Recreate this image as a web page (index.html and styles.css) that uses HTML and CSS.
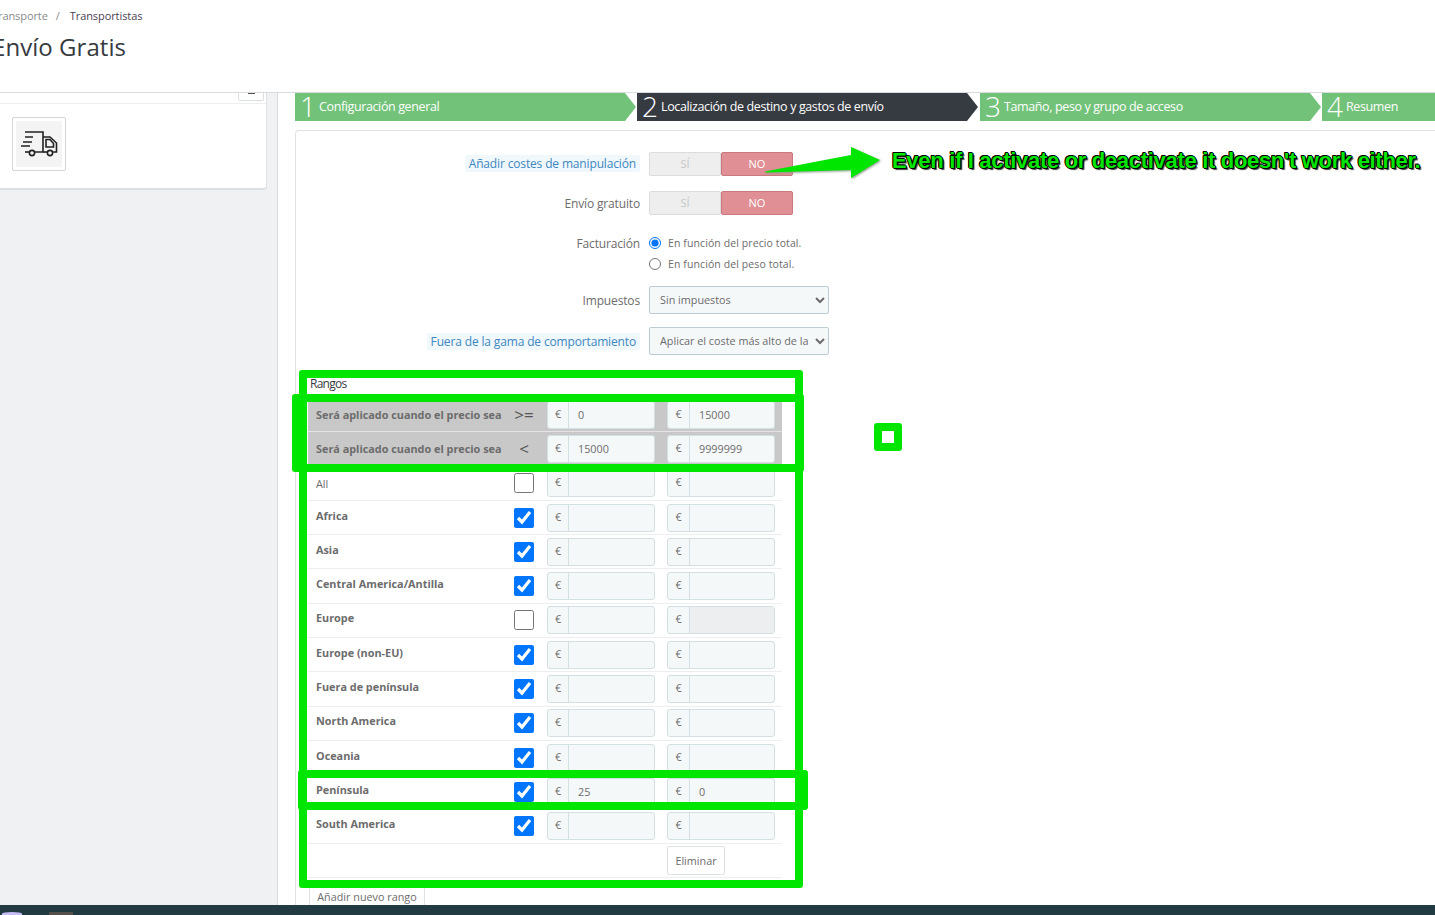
FILE: index.html
```html
<!DOCTYPE html>
<html lang="es">
<head>
  <meta charset="UTF-8" />
  <title>Envío Gratis</title>
  <link rel="stylesheet" href="styles.css">
</head>
<body>
  <div class="page">
    <header class="top">
      <div class="crumbs"><span class="crumb-link">Transporte</span><span class="crumb-sep">/</span><span class="crumb-now">Transportistas</span></div>
      <h1>Envío Gratis</h1>
    </header>

    <div class="main">
      <aside class="side">
        <div class="side-card">
          <div class="side-head"><span class="side-btn"></span></div>
          <div class="thumb">
            <div class="thumb-in">
              <svg width="40" height="34" viewBox="0 0 40 34" fill="none" stroke="#222" stroke-width="1.6">
                <path d="M6 5H24V25H16" />
                <path d="M24 10H31L37.5 16V25H34" />
                <path d="M28 25H24" />
                <path d="M27 12.5H31L34.5 16.5V20H27Z" />
                <circle cx="13" cy="26" r="2.6" />
                <circle cx="31" cy="26" r="2.6" />
                <path d="M6 25H10" />
                <path d="M6 10H14M4 15H13M2 19H11" />
              </svg>
            </div>
          </div>
        </div>
      </aside>

      <div class="content">
        <div class="steps">
          <div class="step"><span class="step-num">1</span>Configuración general</div>
          <div class="step step-on"><span class="step-num">2</span>Localización de destino y gastos de envío</div>
          <div class="step step-3"><span class="step-num">3</span>Tamaño, peso y grupo de acceso</div>
          <div class="step step-last"><span class="step-num">4</span>Resumen</div>
        </div>

        <div class="panel">
          <div class="form-row row-1">
            <div class="label"><span class="hint">Añadir costes de manipulación</span></div>
            <div class="toggle"><span class="opt-si">SÍ</span><span class="opt-no">NO</span></div>
          </div>
          <div class="form-row row-2">
            <div class="label">Envío gratuito</div>
            <div class="toggle"><span class="opt-si">SÍ</span><span class="opt-no">NO</span></div>
          </div>
          <div class="form-row row-3">
            <div class="label label-radio">Facturación</div>
            <div class="radios">
              <label class="radio"><input type="radio" name="fact" checked>En función del precio total.</label>
              <label class="radio"><input type="radio" name="fact">En función del peso total.</label>
            </div>
          </div>
          <div class="form-row row-4">
            <div class="label">Impuestos</div>
            <select class="sel"><option>Sin impuestos</option></select>
          </div>
          <div class="form-row row-5">
            <div class="label"><span class="hint">Fuera de la gama de comportamiento</span></div>
            <select class="sel"><option>Aplicar el coste más alto de la gama definida</option></select>
          </div>

          <div class="ranges-title">Rangos</div>
          <div class="ranges">
            <div class="range range-head">
              <div class="range-name">Será aplicado cuando el precio sea</div>
              <div class="range-sign">&gt;=</div>
              <div class="money"><span>€</span><input value="0"></div>
              <div class="money"><span>€</span><input value="15000"></div>
            </div>
            <div class="range range-head">
              <div class="range-name">Será aplicado cuando el precio sea</div>
              <div class="range-sign">&lt;</div>
              <div class="money"><span>€</span><input value="15000"></div>
              <div class="money"><span>€</span><input value="9999999"></div>
            </div>
            <div class="range">
              <div class="range-name range-all">All</div>
              <input class="check" type="checkbox">
              <div class="money"><span>€</span><input></div>
              <div class="money"><span>€</span><input></div>
            </div>
            <div class="range">
              <div class="range-name">Africa</div>
              <input class="check" type="checkbox" checked>
              <div class="money"><span>€</span><input></div>
              <div class="money"><span>€</span><input></div>
            </div>
            <div class="range">
              <div class="range-name">Asia</div>
              <input class="check" type="checkbox" checked>
              <div class="money"><span>€</span><input></div>
              <div class="money"><span>€</span><input></div>
            </div>
            <div class="range">
              <div class="range-name">Central America/Antilla</div>
              <input class="check" type="checkbox" checked>
              <div class="money"><span>€</span><input></div>
              <div class="money"><span>€</span><input></div>
            </div>
            <div class="range">
              <div class="range-name">Europe</div>
              <input class="check" type="checkbox">
              <div class="money"><span>€</span><input></div>
              <div class="money money-off"><span>€</span><input disabled></div>
            </div>
            <div class="range">
              <div class="range-name">Europe (non-EU)</div>
              <input class="check" type="checkbox" checked>
              <div class="money"><span>€</span><input></div>
              <div class="money"><span>€</span><input></div>
            </div>
            <div class="range">
              <div class="range-name">Fuera de península</div>
              <input class="check" type="checkbox" checked>
              <div class="money"><span>€</span><input></div>
              <div class="money"><span>€</span><input></div>
            </div>
            <div class="range">
              <div class="range-name">North America</div>
              <input class="check" type="checkbox" checked>
              <div class="money"><span>€</span><input></div>
              <div class="money"><span>€</span><input></div>
            </div>
            <div class="range">
              <div class="range-name">Oceania</div>
              <input class="check" type="checkbox" checked>
              <div class="money"><span>€</span><input></div>
              <div class="money"><span>€</span><input></div>
            </div>
            <div class="range">
              <div class="range-name">Península</div>
              <input class="check" type="checkbox" checked>
              <div class="money"><span>€</span><input value="25"></div>
              <div class="money"><span>€</span><input value="0"></div>
            </div>
            <div class="range">
              <div class="range-name">South America</div>
              <input class="check" type="checkbox" checked>
              <div class="money"><span>€</span><input></div>
              <div class="money"><span>€</span><input></div>
            </div>
            <div class="range range-foot">
              <button class="btn btn-del">Eliminar</button>
            </div>
          </div>
          <button class="btn btn-add">Añadir nuevo rango</button>
        </div>
      </div>
    </div>

    <footer class="taskbar"><span class="task-a"></span><span class="task-b"></span></footer>

    <!-- anotaciones verdes encima de la captura -->
    <div class="mark mark-all"></div>
    <div class="mark mark-head"></div>
    <div class="mark mark-pen"></div>
    <div class="mark mark-dot"></div>
    <svg class="arrow" width="120" height="36" viewBox="0 0 120 36">
      <path d="M0 25.5L86 9V1L115 14L86 32V24L0 26.5Z" fill="#00e600" />
    </svg>
    <div class="shout">Even if I activate or deactivate it doesn't work either.</div>
  </div>
</body>
</html>
```

FILE: styles.css
```css
html, body {
  margin: 0;
  padding: 0;
}

body {
  font-family: "Open Sans", "Noto Sans", sans-serif;
  font-size: 12px;
  color: #6c6c6c;
  background: #fff;
}

.page {
  position: relative;
  width: 1435px;
  height: 915px;
  overflow: hidden;
  display: flex;
  flex-direction: column;
}

/* Cabecera */
.top {
  height: 93px;
  flex: none;
  box-sizing: border-box;
  margin-left: -8px;
  padding-top: 8px;
  border-bottom: 1px solid #d9dcde;
  background: #fff;
}

.crumbs {
  font-size: 11px;
  line-height: 16px;
  letter-spacing: -0.08px;
  color: #8a8a8a;
}

.crumb-sep {
  margin: 0 10px 0 8px;
}

.crumb-now {
  color: #4d3f55;
}

.top h1 {
  margin: 7px 0 0;
  font-size: 24px;
  line-height: 32px;
  font-weight: 400;
  letter-spacing: 0.05px;
  color: #363a41;
}

/* Cuerpo */
.main {
  flex: 1;
  display: flex;
  min-height: 0;
}

.side {
  width: 278px;
  flex: none;
  box-sizing: border-box;
  border-right: 1px solid #d9dcde;
  background: #eff1f2;
}

.side-card {
  width: 267px;
  height: 97px;
  box-sizing: border-box;
  background: #fff;
  border-radius: 0 0 4px 0;
  border-right: 1px solid #dfe2e4;
  border-bottom: 2px solid #dcdfe1;
}

.side-head {
  height: 10px;
  border-bottom: 1px solid #eceeef;
  position: relative;
}

.side-btn {
  position: absolute;
  left: 238px;
  top: -1px;
  width: 26px;
  height: 9px;
  box-sizing: border-box;
  border: 1px solid #dcdfe1;
  border-top: 0;
  border-radius: 0 0 2px 2px;
  background: linear-gradient(#555, #555) center 1px / 7px 1px no-repeat;
}

.thumb {
  margin: 13px 0 0 12px;
  width: 54px;
  height: 54px;
  box-sizing: border-box;
  padding: 3px;
  border: 1px solid #d3d6d8;
  border-radius: 2px;
}

.thumb-in {
  height: 100%;
  background: #f4f4f4;
  display: flex;
  align-items: center;
  justify-content: center;
}

.content {
  flex: 1;
  min-width: 0;
  padding-left: 17px;
}

/* Pasos */
.steps {
  display: flex;
  height: 28px;
  color: #fff;
  white-space: nowrap;
}

.step {
  width: 341px;
  flex: none;
  margin-right: 1px;
  box-sizing: border-box;
  padding: 0 0 2px 5px;
  display: flex;
  align-items: center;
  background: #72c279;
  font-size: 12.5px;
  letter-spacing: -0.38px;
  clip-path: polygon(0 0, 330px 0, 100% 50%, 330px 100%, 0 100%);
}

.step-on {
  background: #363a41;
}

.step-3 {
  margin-left: 1px;
}

.step-last {
  flex: 1;
  margin-right: 0;
  clip-path: none;
}

.step-num {
  width: 19px;
  flex: none;
  font-size: 28px;
  font-weight: 300;
  letter-spacing: 0;
  line-height: 26px;
}

/* Formulario */
.panel {
  margin-top: 9px;
  height: 800px;
  box-sizing: border-box;
  padding-top: 21px;
  border: 1px solid #dfe2e4;
  border-right: 0;
  border-radius: 4px 0 0 0;
}

.form-row {
  display: grid;
  grid-template-columns: 344px 1fr;
  column-gap: 9px;
  align-items: center;
}

.row-1 { height: 24px; margin-bottom: 15px; }
.row-2 { height: 24px; margin-bottom: 18px; }
.row-3 { height: 42px; margin-bottom: 11px; align-items: start; }
.row-4 { height: 28px; margin-bottom: 13px; }
.row-5 { height: 28px; margin-bottom: 24px; }

.row-1 .hint {
  margin-bottom: 2px;
}

.label {
  text-align: right;
  letter-spacing: -0.15px;
}

.label-radio {
  padding-top: 2px;
}

.hint {
  display: inline-block;
  padding: 0 4px;
  line-height: 17px;
  color: #3d87c0;
  background: #f0f8fc;
  border-radius: 2px;
}

.toggle {
  width: 144px;
  height: 24px;
  display: flex;
  font-size: 11px;
  line-height: 22px;
  text-align: center;
}

.toggle span {
  flex: 1;
  box-sizing: border-box;
  border: 1px solid;
  border-radius: 2px;
}

.opt-si {
  color: #c7c7c7;
  background: #eee;
  border-color: #dcdcdc !important;
}

.opt-no {
  color: #fff;
  background: #e08f95;
  border-color: #c9787f !important;
}

.radios {
  display: flex;
  flex-direction: column;
  gap: 1px;
  font-size: 10.5px;
  letter-spacing: 0.1px;
}

.radio {
  height: 20px;
  display: flex;
  align-items: center;
  gap: 7px;
}

.radio input {
  margin: 0;
  width: 12px;
  height: 12px;
}

.sel {
  width: 180px;
  height: 28px;
  box-sizing: border-box;
  padding: 0 3px 2px 6px;
  font-family: inherit;
  font-size: 10.8px;
  color: #6c6c6c;
  background-color: #f5f8f9;
  border: 1px solid #bbcdd2;
  border-radius: 2px;
}

/* Rangos */
.ranges-title {
  height: 19px;
  margin-left: 14px;
  line-height: 10px;
  color: #363a41;
  letter-spacing: -0.75px;
}

.ranges {
  margin-left: 12px;
  width: 474px;
}

.range {
  height: 34.3px;
  box-sizing: border-box;
  padding-left: 8px;
  display: grid;
  grid-template-columns: 198px 33px 108px 120px;
  align-items: center;
  border-bottom: 1px solid #eceeef;
}

.range .money + .money {
  margin-left: 12px;
}

.range .money + .money span {
  width: 22px;
}

.range-head {
  background: #c8c8c8;
  border-bottom-color: #e4e4e4;
}

.range-name {
  font-size: 10.85px;
  font-weight: 700;
  padding-bottom: 5px;
}

.range-head .range-name {
  padding-bottom: 0;
}

.range-all {
  font-weight: 400;
  padding: 0;
}

.range-sign {
  font-size: 17px;
  font-weight: 400;
  width: 20px;
  text-align: center;
  color: #555;
}

.check {
  margin: 0;
  width: 20px;
  height: 20px;
}

.money {
  width: 108px;
  height: 28px;
  box-sizing: border-box;
  display: flex;
  border: 1px solid #d3dfe2;
  border-radius: 3px;
  background: #f5f8f9;
  font-size: 10.8px;
}

.money span {
  width: 21px;
  flex: none;
  box-sizing: border-box;
  border-right: 1px solid #d3dfe2;
  text-align: center;
  line-height: 24px;
}

.money input {
  min-width: 0;
  width: 100%;
  box-sizing: border-box;
  padding: 0 8px 0 9px;
  border: 0;
  background: transparent;
  font-family: inherit;
  font-size: 10.8px;
  color: #6c6c6c;
}

.money-off input {
  background: #eceeef;
}

.range-foot {
  display: flex;
  padding-left: 359px;
}

.btn {
  box-sizing: border-box;
  font-family: inherit;
  font-size: 10.8px;
  color: #6c6c6c;
  background: #fff;
  border: 1px solid #dfe2e4;
  border-radius: 2px;
  padding: 0;
}

.btn-del {
  width: 58px;
  height: 29px;
}

.btn-add {
  display: block;
  margin: 5px 0 0 13px;
  width: 116px;
  height: 26px;
}

.taskbar {
  height: 10px;
  flex: none;
  position: relative;
  z-index: 2;
  background: #223a42;
}

.task-a {
  position: absolute;
  left: 2px;
  top: 7px;
  width: 20px;
  height: 3px;
  border-radius: 50% 50% 0 0;
  background: #c6bdf5;
}

.task-b {
  position: absolute;
  left: 49px;
  top: 7px;
  width: 24px;
  height: 3px;
  background: #55504c;
}

/* Anotaciones */
.mark {
  position: absolute;
  box-sizing: border-box;
  border: 8px solid #00e600;
  border-radius: 3px;
}

.mark-all {
  left: 299px;
  top: 370px;
  width: 504px;
  height: 518px;
}

.mark-head {
  left: 292px;
  top: 394px;
  width: 512px;
  height: 78px;
}

.mark-pen {
  left: 298px;
  top: 770px;
  width: 510px;
  height: 40px;
}

.mark-dot {
  left: 874px;
  top: 423px;
  width: 28px;
  height: 28px;
  border-width: 8px;
  background: #fff;
}

.arrow {
  position: absolute;
  left: 765px;
  top: 146px;
  filter: drop-shadow(1px 1px 1px #8a9a8a);
}

.shout {
  position: absolute;
  left: 892px;
  top: 146px;
  font-family: "Liberation Sans", Arial, sans-serif;
  font-size: 22px;
  line-height: 30px;
  font-weight: 700;
  letter-spacing: -0.31px;
  white-space: nowrap;
  color: #00e600;
  text-shadow: 1px 0 0 #000, -1px 0 0 #000, 0 1px 0 #000, 0 -1px 0 #000, 1px 1px 0 #000, -1px -1px 0 #000, 2px 2px 1px #444;
}
```
